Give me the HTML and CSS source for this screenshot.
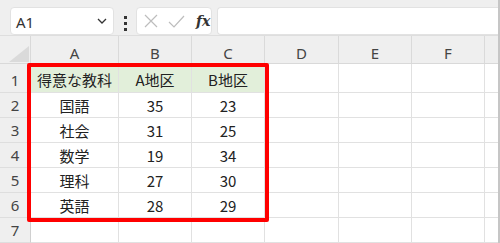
FILE: index.html
```html
<!DOCTYPE html>
<html lang="ja">
<head>
    <meta charset="UTF-8">
    <title>得意な教科</title>
    <link rel="stylesheet" href="styles.css">
</head>
<body>
    <div class="frame">
        <div class="toolbar">
            <div class="namebox">
                <span>A1</span>
                <svg class="chevron" width="10" height="6" viewBox="0 0 10 6"><path d="M1 1l4 4 4-4" fill="none" stroke="#333" stroke-width="1.3"/></svg>
            </div>
            <div class="dots"><i></i><i></i><i></i></div>
            <div class="fbuttons">
                <svg width="14" height="14" viewBox="0 0 14 14"><path d="M1 1l12 12M13 1L1 13" stroke="#bdbdbd" stroke-width="1.2"/></svg>
                <svg width="17" height="13" viewBox="0 0 17 13"><path d="M1 7l5 5L16 1" fill="none" stroke="#bdbdbd" stroke-width="1.2"/></svg>
                <span class="fx">fx</span>
            </div>
            <div class="formula"></div>
        </div>

        <div class="sheet">
            <div class="grid">
                <div class="corner"><svg width="20" height="16" viewBox="0 0 20 16"><path d="M20 0v16H0z" fill="#dadada"/></svg></div>
                <div class="colhead">A</div>
                <div class="colhead">B</div>
                <div class="colhead">C</div>
                <div class="colhead">D</div>
                <div class="colhead">E</div>
                <div class="colhead">F</div>
                <div class="colhead rest"></div>

                <div class="rowhead first">1</div>
                <div class="cell head">得意な教科</div>
                <div class="cell head">A地区</div>
                <div class="cell head">B地区</div>
                <div class="cell"></div><div class="cell"></div><div class="cell"></div><div class="cell rest"></div>

                <div class="rowhead">2</div>
                <div class="cell">国語</div><div class="cell">35</div><div class="cell">23</div>
                <div class="cell"></div><div class="cell"></div><div class="cell"></div><div class="cell rest"></div>

                <div class="rowhead">3</div>
                <div class="cell">社会</div><div class="cell">31</div><div class="cell">25</div>
                <div class="cell"></div><div class="cell"></div><div class="cell"></div><div class="cell rest"></div>

                <div class="rowhead">4</div>
                <div class="cell">数学</div><div class="cell">19</div><div class="cell">34</div>
                <div class="cell"></div><div class="cell"></div><div class="cell"></div><div class="cell rest"></div>

                <div class="rowhead">5</div>
                <div class="cell">理科</div><div class="cell">27</div><div class="cell">30</div>
                <div class="cell"></div><div class="cell"></div><div class="cell"></div><div class="cell rest"></div>

                <div class="rowhead">6</div>
                <div class="cell">英語</div><div class="cell">28</div><div class="cell">29</div>
                <div class="cell"></div><div class="cell"></div><div class="cell"></div><div class="cell rest"></div>

                <div class="rowhead">7</div>
                <div class="cell"></div><div class="cell"></div><div class="cell"></div>
                <div class="cell"></div><div class="cell"></div><div class="cell"></div><div class="cell rest"></div>
            </div>
            <div class="highlight"></div>
        </div>
    </div>
</body>
</html>
```

FILE: styles.css
```css
* {
    box-sizing: border-box;
}
body {
    margin: 0;
    font-family: "Noto Sans CJK JP", "Noto Sans", sans-serif;
    color: #222;
}
.frame {
    width: 500px;
    height: 243px;
    overflow: hidden;
    border-right: 2px solid #c6c6c6;
    background: #fff;
}
.toolbar {
    display: flex;
    align-items: flex-start;
    height: 36px;
    padding: 7px 0 0 10px;
    background: #efefef;
    border-bottom: 1px solid #dedede;
}
.namebox {
    display: flex;
    align-items: center;
    justify-content: space-between;
    width: 104px;
    height: 28px;
    padding: 0 6px 0 5px;
    background: #fff;
    border: 1px solid #e2e2e2;
    border-radius: 4px;
    font-family: "Noto Sans", sans-serif;
    font-size: 15px;
    color: #333;
}
.namebox span {
    margin-top: 1px;
}
.dots {
    display: flex;
    flex-direction: column;
    align-items: center;
    gap: 3px;
    width: 22px;
    padding-top: 9px;
}
.dots i {
    width: 3px;
    height: 3px;
    background: #333;
}
.fbuttons {
    display: flex;
    align-items: center;
    gap: 10px;
    width: 76px;
    height: 28px;
    padding-left: 7px;
    background: #fff;
    border: 1px solid #e2e2e2;
    border-radius: 4px;
}
.fx {
    font-family: "DejaVu Serif", serif;
    font-style: italic;
    font-weight: bold;
    font-size: 14px;
    color: #333;
    margin-left: 1px;
}
.formula {
    flex: 1;
    height: 28px;
    margin-left: 5px;
    background: #fff;
    border: 1px solid #e2e2e2;
    border-right: none;
    border-radius: 4px 0 0 4px;
}
.sheet {
    position: relative;
}
.grid {
    display: grid;
    grid-template-columns: 31px 88px 73px 73px 74px 73px 73px 1fr;
    grid-template-rows: 28px 29px repeat(6, 25px);
    background: #efefef;
}
.corner, .colhead, .rowhead {
    background: #efefef;
    color: #444;
    font-family: "Noto Sans", sans-serif;
    font-size: 15px;
}
.corner {
    display: flex;
    align-items: flex-end;
    justify-content: flex-end;
    padding: 0 1px 1px 0;
    border-right: 1px solid #d9d9d9;
    border-bottom: 1px solid #d9d9d9;
}
.colhead {
    display: flex;
    align-items: center;
    justify-content: center;
    padding-top: 6px;
    border-right: 1px solid #dadada;
    border-bottom: 1px solid #d9d9d9;
}
.rowhead {
    display: flex;
    align-items: center;
    justify-content: center;
    border-right: 1px solid #d0d0d0;
    border-bottom: 1px solid #dedede;
}
.rowhead.first {
    padding-top: 3px;
}
.cell {
    display: flex;
    align-items: center;
    justify-content: center;
    background: #fff;
    border-right: 1px solid #e1e1e1;
    border-bottom: 1px solid #e1e1e1;
    font-size: 15px;
    color: #222;
}
.cell.head {
    background: #e2efda;
    padding-top: 3px;
}
.rest {
    border-right: none;
}
.highlight {
    position: absolute;
    left: 27px;
    top: 27px;
    width: 242px;
    height: 159px;
    border: 4px solid #ff0000;
    border-radius: 2px;
}
```
